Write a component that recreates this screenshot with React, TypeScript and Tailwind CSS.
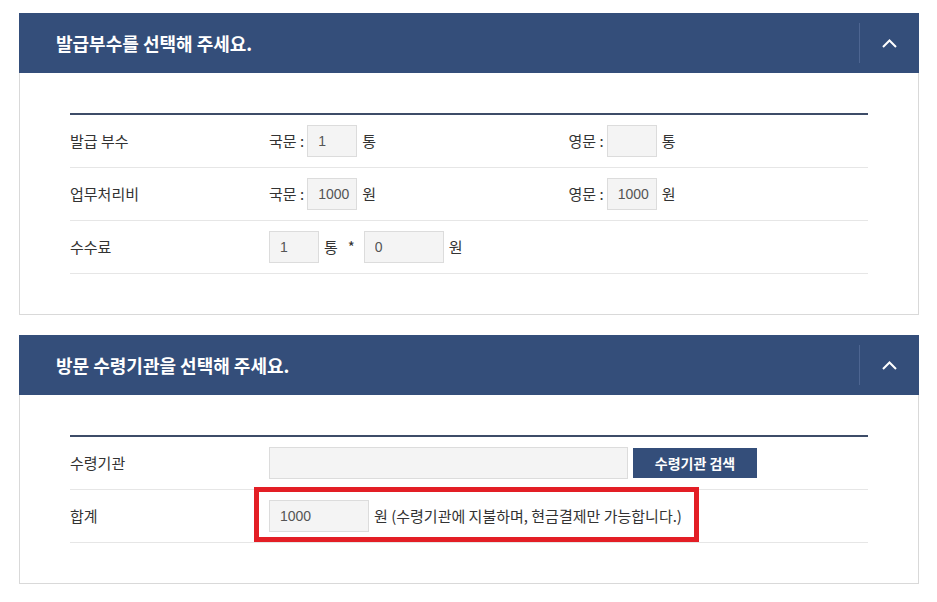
import React from 'react'

const font = { fontFamily: '"Noto Sans CJK KR", "Liberation Sans", sans-serif' }

function Box({ value, width }: { value: string; width: string }) {
  return (
    <input
      readOnly
      value={value}
      className={`${width} h-[32px] shrink-0 border border-[#dcdcdc] bg-[#f4f4f4] pl-[10px] text-[14px] text-[#555] outline-none`}
      style={{ fontFamily: '"Liberation Sans", "Noto Sans CJK KR", sans-serif' }}
    />
  )
}

function Chevron() {
  return (
    <svg width="15" height="9" viewBox="0 0 15 9" fill="none">
      <polyline points="1,8 7.5,1.5 14,8" stroke="#fff" strokeWidth="2" />
    </svg>
  )
}

function Panel({ title, children }: { title: string; children: React.ReactNode }) {
  return (
    <div className="w-[900px]">
      <div className="flex h-[60px] items-center bg-[#344e7a]">
        <h2 className="flex-1 pl-[37px] text-[18px] font-bold text-white">{title}</h2>
        <div className="flex h-[40px] w-[60px] items-center justify-center border-l border-[#4d6591]">
          <Chevron />
        </div>
      </div>
      <div className="border-x border-b border-[#d9d9d9] bg-white px-[50px] pt-[40px] pb-[40px]">
        <div className="border-t-2 border-[#3d4c68]">{children}</div>
      </div>
    </div>
  )
}

function Row({ label, children }: { label: string; children: React.ReactNode }) {
  return (
    <div className="relative flex h-[53px] items-center border-b border-[#e6e6e6]">
      <div className="w-[199px] shrink-0 text-[15px] text-[#333]">{label}</div>
      <div className="flex min-w-0 flex-1 items-center text-[15px] text-[#333]">{children}</div>
    </div>
  )
}

export default function App() {
  return (
    <div className="min-h-[602px] bg-white pt-[13px] pl-[19px]" style={font}>
      <Panel title="발급부수를 선택해 주세요.">
        <Row label="발급 부수">
          <div className="grid w-full grid-cols-2">
            <div className="flex items-center">
              <span className="mr-[3px]">국문 :</span>
              <Box value="1" width="w-[50px]" />
              <span className="ml-[5px]">통</span>
            </div>
            <div className="flex items-center">
              <span className="mr-[3px]">영문 :</span>
              <Box value="" width="w-[50px]" />
              <span className="ml-[5px]">통</span>
            </div>
          </div>
        </Row>
        <Row label="업무처리비">
          <div className="grid w-full grid-cols-2">
            <div className="flex items-center">
              <span className="mr-[3px]">국문 :</span>
              <Box value="1000" width="w-[50px]" />
              <span className="ml-[5px]">원</span>
            </div>
            <div className="flex items-center">
              <span className="mr-[3px]">영문 :</span>
              <Box value="1000" width="w-[50px]" />
              <span className="ml-[5px]">원</span>
            </div>
          </div>
        </Row>
        <Row label="수수료">
          <Box value="1" width="w-[50px]" />
          <span className="ml-[5px]">통</span>
          <span className="ml-[10px] mr-[9px]">*</span>
          <Box value="0" width="w-[80px]" />
          <span className="ml-[5px]">원</span>
        </Row>
      </Panel>

      <div className="h-[20px]" />

      <Panel title="방문 수령기관을 선택해 주세요.">
        <Row label="수령기관">
          <Box value="" width="w-[359px]" />
          <button className="ml-[5px] h-[30px] w-[124px] bg-[#344e7a] text-[14px] font-bold text-white">
            수령기관 검색
          </button>
        </Row>
        <Row label="합계">
          <Box value="1000" width="w-[100px]" />
          <span className="ml-[5px]">원 (수령기관에 지불하며, 현금결제만 가능합니다.)</span>
          <div className="pointer-events-none absolute left-[184px] top-[-3px] h-[55px] w-[445px] border-[5px] border-[#e31e25]" />
        </Row>
      </Panel>
    </div>
  )
}
